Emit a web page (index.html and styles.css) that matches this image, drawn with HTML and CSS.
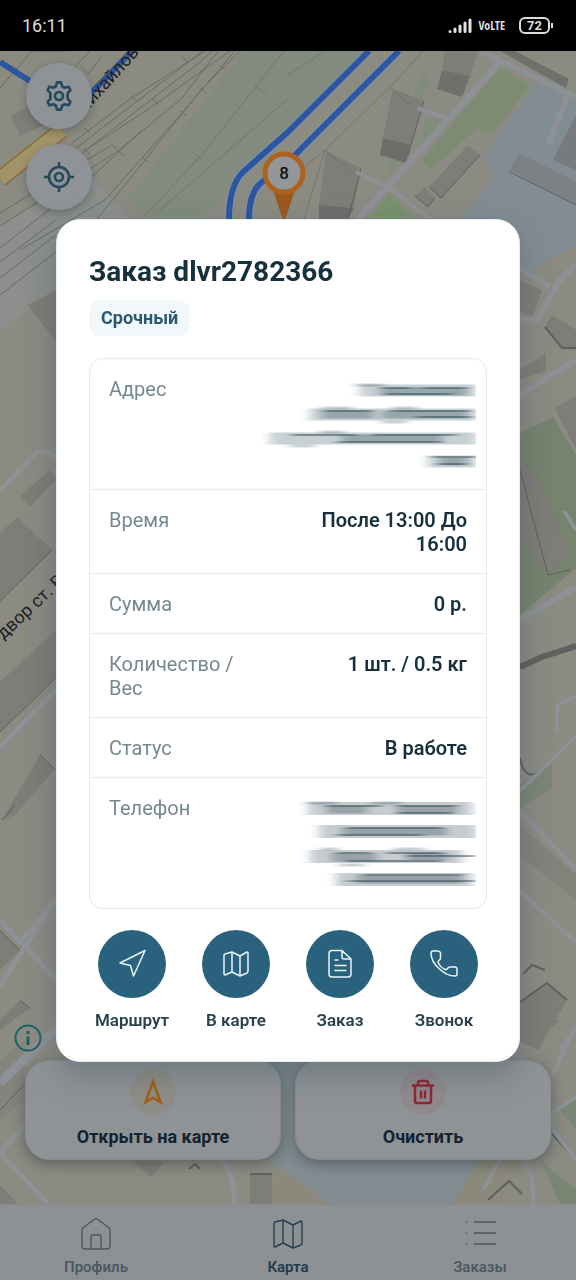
FILE: index.html
```html
<!DOCTYPE html>
<html lang="ru">

<head>
    <meta charset="UTF-8">
    <meta name="viewport" content="width=device-width, initial-scale=1.0">
    <title>Заказ dlvr2782366</title>
    <link rel="stylesheet" href="styles.css">
</head>

<body>
    <header class="status-bar">
        <span class="clock">16:11</span>
        <div class="status-icons">
            <svg width="24" height="16" viewBox="0 0 24 16" fill="none" stroke="#e4e4e4" stroke-width="3" stroke-linecap="round">
                <path d="M2 13.5v.1M7 11v2.6M12 8v5.6M17 5v8.6M22 2v11.6" />
            </svg>
            <span class="volte">VoLTE</span>
            <span class="battery">72</span>
        </div>
    </header>

    <main class="map">
        <svg class="map-canvas" viewBox="0 51 576 1153" preserveAspectRatio="xMidYMid slice">
            <rect y="51" width="576" height="1153" fill="#8b8b82" />

            <!-- ground areas -->
            <path d="M128 198L245 51H372L200 219H150z" fill="#828b7e" />
            <path d="M0 225L90 175 130 219 56 290 0 330z" fill="#8c8f8c" />
            <path d="M536 83L576 100V245L520 275 455 225 495 175 484 156z" fill="#828d93" />
            <path d="M500 68L530 86 492 134 477 128 430 170 422 160z" fill="#7d8b73" />
            <path d="M425 68L430 88 405 107 411 100z" fill="#828b7e" />
            <path d="M425 118L440 120 420 148zM388 162L402 158 388 176z" fill="#818c7a" />
            <path d="M389 194L413 219H368z" fill="#78926f" />
            <path d="M520 433L553 417 576 455V568L520 615z" fill="#76836f" />
            <path d="M520 785L552 760V788L520 808z" fill="#7b8577" />
            <path d="M280 1061H500L490 1160 452 1204H330L280 1168z" fill="#838c91" />
            <path d="M330 1204L280 1168 262 1204zM452 1204L480 1160H520L500 1204z" fill="#8b897b" />
            <path d="M560 1110L576 1095V1130zM540 1160L576 1190V1204H560z" fill="#7a8674" />
            <path d="M262 1061H290V1150L275 1170z" fill="#808b90" />

            <!-- buildings -->
            <g fill="#7e7d77">
                <path d="M442 70L470 76 462 97 437 89z" fill="#6f706c" />
                <path d="M445 51H478L470 76 442 70z" />
                <path d="M393 89L424 101 411 145 383 138z" />
                <path d="M383 138L411 145 406 163 380 155z" fill="#6c6d69" />
                <path d="M326 151L361 168 354 208 319 205z" />
                <path d="M319 205L354 208 348 219H319z" fill="#6d6e6a" />
                <path d="M468 145L480 155 441 198 429 187z" />
                <path d="M425 187L435 198 428 207 415 196z" />
                <path d="M500 51H515L569 79 566 88z" fill="#6f706c" />
                <path d="M519 153L576 182V205L510 170z" fill="#7a8084" />
                <path d="M576 115V170L553 160z" fill="#777b7e" />
                <path d="M11 115L45 100 60 118 20 136z" />
                <path d="M0 533L17 517 52 550 0 601z" />
                <path d="M28 305L56 290V342z" />
                <path d="M20 496L50 470 56 480 30 507z" />
                <path d="M0 682L56 630V678L0 732z" />
                <path d="M2 820L40 755 55 769 15 815z" />
                <path d="M0 930L20 950 0 970zM0 1020L20 1000 30 1008 0 1030z" />
                <path d="M520 465L535 470 568 552 548 575 520 540z" />
                <path d="M520 280L542 290 533 316 520 312z" />
                <path d="M545 327L552 315 576 330V350L562 348z" />
                <path d="M555 408L576 396V450z" />
                <path d="M520 370L546 353V371L520 379z" />
                <path d="M520 1002L547 983 567 1000 538 1050 520 1042z" />
                <path d="M520 825L576 875V900L520 856z" opacity=".6" />
                <path d="M525 1025L545 1034 560 1020H525zM0 1185L18 1204H0z" />
                <path d="M133 1161H165L151 1177zM250 1173H272V1204H250z" />
                <path d="M0 1060L25 1040V1100L0 1120z" opacity=".5" />
            </g>
            <g fill="none" stroke="#5f615e">
                <path d="M0 601L52 550M0 732L56 678M2 820L15 805M40 755L55 769M0 930L20 951M20 1000L30 1008" />
                <path d="M361 168L348 219M424 101L408 155M480 155L441 198 429 187M415 196L428 207 435 198M510 172L576 205" />
                <path d="M520 667L542 657 576 646" stroke-width="6" />
                <path d="M520 758Q525 785 545 768" stroke-width="2" />
                <path d="M545 327L562 348H576" stroke-width="2" />
                <path d="M488 1200L509 1181 522 1194M552 1134L576 1160M520 1002L547 983 567 1000M523 974L532 965 545 970" stroke-width="2" />
                <path d="M189 1169L195 1164 200 1169M250 1174H272" stroke-width="2" />
                <path d="M0 1110L25 1084M520 470L548 575 570 570" />
            </g>

            <!-- railways -->
            <g fill="none" stroke="#696b67">
                <path d="M72 143L130 99 205 51M76 148L195 57 202 51M82 153L200 62 212 51M86 150L150 108 230 51" />
                <path d="M0 213L110 146M0 226L118 151 182 98 218 51M0 248L95 174 142 130M20 250L105 200 182 113 235 51M80 240L145 160 200 91 240 51" />
                <path d="M0 262L56 220M0 278L56 235M0 295L56 252" />
                <path d="M144 217L205 151 284 51M160 210L290 97M325 51L288 75M423 51L390 87 325 150 300 170M325 150L304 219M389 87L410 105M325 150L355 174" opacity=".6" />
                <path d="M255 86L267 95M196 154L203 161" opacity=".6" />
                <path d="M182 57l6 5M131 96l6 5M152 99l6 5M111 144l6 5M142 157l6 5M181 111l6 5M200 88l6 5M219 65l6 5M84 128l6 5M84 149l6 5M118 151l6 5" />
                <path d="M65 51L32 51 0 88M72 70L90 51M80 66l8 8 14-18" />
            </g>

            <!-- streets -->
            <g fill="none" stroke="#8e9195" stroke-width="6" stroke-linejoin="round">
                <path d="M501 61L388 186 358 219M480 51L576 97M568 95L548 145" />
                <path d="M356 172L388 187 430 219M417 108L447 118" stroke-width="4" />
                <path d="M0 490L37 452H47L56 457M0 747L56 690M0 921L37 959 56 980M0 986L56 899M20 942L56 899" stroke-width="5" />
                <path d="M0 1083L60 1025" stroke-width="9" />
                <path d="M24 1126L0 1153 48 1204M220 1160Q235 1170 234 1204" stroke-width="5" />
                <path d="M520 268L550 287M520 320H537L560 280 576 265M520 395L576 360M520 620L576 587" />
                <path d="M564 511L576 530M576 696L557 705V733M520 791L576 736M520 812L576 869M520 891L576 942M560 1050L576 1027" stroke-width="4" />
                <path d="M576 1025L552 1076M553 1112L576 1097M553 1112V1130L576 1160M500 1160L483 1190M524 1160Q534 1175 533 1204M508 1050L530 1065" stroke-width="4" />
            </g>

            <!-- main roads -->
            <path d="M0 179L62 130" fill="none" stroke="#8a6b3c" stroke-width="17" />
            <path d="M0 179L62 130" fill="none" stroke="#a19468" stroke-width="14" />
            <path d="M58 122L128 51" fill="none" stroke="#a08a55" stroke-width="2" />
            <g fill="none" stroke-linejoin="round">
                <g stroke="#8294a9" stroke-width="8">
                    <path d="M369 51L288 132 243 172Q229 186 229 219M399 51L292 158 262 182Q249 192 249 219" />
                </g>
                <g stroke="#2c56a0" stroke-width="6">
                    <path d="M369 51L288 132 243 172Q229 186 229 219M399 51L292 158 262 182Q249 192 249 219" />
                    <path d="M0 62L30 81 60 105 93 91 132 51" />
                </g>
            </g>

            <text class="street-name" transform="translate(82 117) rotate(-48)">Михайлово</text>
            <text class="street-name" transform="translate(-6 649) rotate(-43)">т двор ст. В</text>

            <!-- order marker -->
            <path d="M284 223L273 190H295z" fill="#9c581d" />
            <circle cx="284" cy="173" r="19" fill="#94979a" stroke="#ad621f" stroke-width="5" />
            <text class="marker-number" x="284" y="179">8</text>
        </svg>

        <div class="map-controls">
            <button class="round-btn" type="button" aria-label="Настройки">
                <svg width="32" height="32" viewBox="0 0 24 24" fill="none" stroke="#24495a" stroke-width="2" stroke-linejoin="round">
                    <path d="M10.500 1.800h3l.8 2.900 1.900 1.100 2.900-.8 1.500 2.600-2.100 2.200v4.400l2.100 2.200-1.500 2.600-2.900-.8-1.900 1.100-.8 2.900h-3l-.8-2.900-1.900-1.100-2.900.8-1.500-2.600 2.100-2.200v-4.400L3.400 7.600 4.900 5l2.900.8 1.900-1.100z" />
                    <circle cx="12" cy="12" r="3" />
                </svg>
            </button>
            <button class="round-btn" type="button" aria-label="Моё местоположение">
                <svg width="32" height="32" viewBox="0 0 32 32" fill="none" stroke="#24495a" stroke-width="2.600">
                    <circle cx="16" cy="16" r="10" />
                    <circle cx="16" cy="16" r="4" />
                    <path d="M16 1v5M16 26v5M1 16h5M26 16h5" />
                </svg>
            </button>
        </div>

        <div class="map-footer">
            <button class="info-btn" type="button" aria-label="Информация">
                <svg width="28" height="28" viewBox="0 0 28 28" fill="none" stroke="#1d6165" stroke-width="2">
                    <circle cx="14" cy="14" r="12.5" />
                    <path d="M14 12.5V21M14 7v3" stroke-width="3" />
                </svg>
            </button>
            <div class="map-actions">
                <button class="map-action" type="button">
                    <span class="action-icon open">
                        <svg width="24" height="28" viewBox="0 0 24 28" fill="none" stroke="#a45d12" stroke-width="2.500">
                            <path d="M12 3.500L4.500 24l7.500-4 7.500 4z" />
                        </svg>
                    </span>
                    Открыть на карте
                </button>
                <button class="map-action" type="button">
                    <span class="action-icon clear">
                        <svg width="24" height="28" viewBox="0 0 24 28" fill="none" stroke="#912631" stroke-width="2.500" stroke-linejoin="round">
                            <path d="M1 7.5h22M4 7.5V23q0 2 2 2h12q2 0 2-2V7.5M7 7.5V5q0-2 2-2h6q2 0 2 2v2.5M10 12.5v8M14 12.5v8" />
                        </svg>
                    </span>
                    Очистить
                </button>
            </div>
        </div>
    </main>

    <nav class="tab-bar">
        <a class="tab" href="#profile">
            <svg width="34" height="34" viewBox="0 0 34 34" fill="none" stroke="#4c5862" stroke-width="1.4" stroke-linejoin="round">
                <path d="M3 13Q3 12 4 11L15 2.5Q17 1 19 2.5L30 11Q31 12 31 13V29Q31 32 28 32H6Q3 32 3 29zM12 32V19q0-1 1-1h8q1 0 1 1v13" />
            </svg>
            Профиль
        </a>
        <a class="tab active" href="#map">
            <svg width="34" height="34" viewBox="0 0 34 34" fill="none" stroke="#253f50" stroke-width="1.4" stroke-linejoin="round">
                <path d="M3 7q0-1 1-2l8-2 10 5 8-4q1 0 1 1v21q0 1-1 2l-8 3-10-5-8 4q-1 0-1-1zM12 3v23M22 8v23" />
            </svg>
            Карта
        </a>
        <a class="tab" href="#orders">
            <svg width="34" height="34" viewBox="0 0 34 34" fill="none" stroke="#4c5862" stroke-width="1.4">
                <path d="M11 5h22M11 16h22M11 27h22M3 5h1M3 16h1M3 27h1" />
            </svg>
            Заказы
        </a>
    </nav>

    <div class="overlay">
        <section class="modal" role="dialog" aria-labelledby="orderTitle">
            <h1 id="orderTitle">Заказ dlvr2782366</h1>
            <span class="badge">Срочный</span>

            <table class="details">
                <tr>
                    <th scope="row">Адрес</th>
                    <td class="hidden-value">
                        <svg width="214" height="95" viewBox="0 0 214 95" aria-label="Адрес скрыт">
                            <defs>
                                <filter id="smear" x="-10%" y="-10%" width="120%" height="120%">
                                    <feGaussianBlur stdDeviation="5 0.6" />
                                </filter>
                            </defs>
                            <g filter="url(#smear)" stroke="#294450" fill="none">
                                <path stroke-width="12" stroke-opacity=".25" d="M98 13.500H214M48 37.500H214M8 61.500H214M166 84.500H214" />
                                <path stroke-width="8" stroke-opacity=".3" d="M118 14.500H205M60 37.500H112M120 37.500H205M80 61.500H180M178 84.500H205" />
                                <path stroke-width="2" stroke-opacity=".5" d="M120 11H150M160 11H205M125 17H190M62 34H110M130 34H208M155 40H210M30 58H95M110 58H195M75 65H180M170 80H214M176 87H205" />
                                <path stroke-width="3" stroke-opacity=".25" d="M94 8H122M60 31H90M130 31H155M58 55H82M28 69H52M120 45H145" />
                            </g>
                        </svg>
                    </td>
                </tr>
                <tr>
                    <th scope="row">Время</th>
                    <td>После 13:00 До 16:00</td>
                </tr>
                <tr>
                    <th scope="row">Сумма</th>
                    <td>0 р.</td>
                </tr>
                <tr>
                    <th scope="row">Количество / Вес</th>
                    <td>1 шт. / 0.5 кг</td>
                </tr>
                <tr>
                    <th scope="row">Статус</th>
                    <td>В работе</td>
                </tr>
                <tr>
                    <th scope="row">Телефон</th>
                    <td class="hidden-value">
                        <svg width="214" height="95" viewBox="0 0 214 95" aria-label="Телефон скрыт">
                            <g filter="url(#smear)" stroke="#294450" fill="none">
                                <path stroke-width="13" stroke-opacity=".27" d="M46 12.500H210M57 35.500H214M48 60.500H200M74 83.500H210" />
                                <path stroke-width="8" stroke-opacity=".3" d="M65 13.500H105M135 13.500H195M80 35.500H185M70 61.500H115M145 60.500H185M95 83.500H200" />
                                <path stroke-width="2" stroke-opacity=".5" d="M64 10H120M135 10H195M135 17H190M85 32H180M75 39H160M74 57H110M125 57H180M145 60H214M85 65H180M100 79H200M86 85H214" />
                                <path stroke-width="3" stroke-opacity=".25" d="M46 7H75M110 7H140M58 53H76M132 53H162M78 69H102" />
                            </g>
                        </svg>
                    </td>
                </tr>
            </table>

            <div class="actions">
                <button class="action" type="button">
                    <span class="action-circle">
                        <svg width="32" height="32" viewBox="0 0 32 32">
                            <path d="M29 2.500L4 15l10.500 2.500L17.500 28z" />
                        </svg>
                    </span>
                    Маршрут
                </button>
                <button class="action" type="button">
                    <span class="action-circle">
                        <svg width="32" height="32" viewBox="0 0 32 32">
                            <path d="M4 7q0-1 1-1l7-2 8 4 7-4q1 0 1 1v18q0 1-1 2l-7 3-8-4-7 3q-1 0-1-1zM12 4v20M20 8v20" />
                        </svg>
                    </span>
                    В карте
                </button>
                <button class="action" type="button">
                    <span class="action-circle">
                        <svg width="32" height="32" viewBox="0 0 32 32">
                            <path d="M18 2.500H8Q5 2.500 5 5.500V26Q5 29 8 29H24Q27 29 27 26V11zM18 2.500V9Q18 11 20 11H27M11 12h3M11 17.500h11M11 22.500h11" />
                        </svg>
                    </span>
                    Заказ
                </button>
                <button class="action" type="button">
                    <span class="action-circle">
                        <svg width="32" height="32" viewBox="0 0 32 32">
                            <path d="M5 3h5q2 0 2.500 2v5q0 1.500-1.500 2.500-1.500 1-.5 3 2 4 6.500 6 1.500.5 2.500-1 1-1.500 2.500-1.500h5q2 0 2 2v5q0 2-2 2Q19 28 11.500 21 3 13.500 3 5q0-2 2-2z" />
                        </svg>
                    </span>
                    Звонок
                </button>
            </div>
        </section>
    </div>
</body>

</html>
```

FILE: styles.css
```css
* {
    box-sizing: border-box;
}

body {
    margin: 0;
    min-height: 100vh;
    display: flex;
    flex-direction: column;
    background: #000;
    color: #16303d;
    font-family: Roboto, "Noto Sans", sans-serif;
}

button {
    padding: 0;
    border: none;
    background: none;
    color: inherit;
    font-family: inherit;
    cursor: pointer;
}

svg {
    display: block;
}

/* Status bar */
.status-bar {
    height: 51px;
    padding: 0 26px 0 22px;
    display: flex;
    align-items: center;
    justify-content: space-between;
    color: #dcdcdc;
}

.clock {
    font-size: 18px;
}

.status-icons {
    display: flex;
    align-items: center;
    gap: 6px;
}

.volte {
    margin-right: 8px;
    font-family: "Liberation Sans Narrow", "Open Sans Condensed", Lato, sans-serif;
    font-size: 12px;
    font-weight: 700;
}

.battery {
    position: relative;
    width: 31px;
    height: 17px;
    border: 2px solid #dcdcdc;
    border-radius: 6px;
    font-size: 13px;
    font-weight: 700;
    line-height: 13px;
    text-align: center;
}

.battery::after {
    content: "";
    position: absolute;
    top: 4px;
    right: -5px;
    width: 2px;
    height: 5px;
    background: #dcdcdc;
}

/* Map */
.map {
    position: relative;
    flex: 1;
    display: flex;
    flex-direction: column;
    justify-content: space-between;
    overflow: hidden;
}

.map-canvas {
    position: absolute;
    inset: 0;
    width: 100%;
    height: 100%;
}

.street-name {
    fill: #1e2226;
    font-size: 18px;
}

.marker-number {
    fill: #111;
    font-size: 17px;
    font-weight: 500;
    text-anchor: middle;
}

.map-controls {
    position: relative;
    display: flex;
    flex-direction: column;
    align-items: flex-start;
    gap: 15px;
    padding: 12px 26px;
}

.round-btn {
    width: 66px;
    height: 66px;
    display: flex;
    align-items: center;
    justify-content: center;
    border-radius: 50%;
    background: #8f9397;
    box-shadow: 0 3px 8px rgba(20, 30, 40, 0.3);
}

.map-footer {
    position: relative;
    padding: 0 25px 44px;
}

.info-btn {
    margin: 0 0 8px -11px;
    display: block;
}

.map-actions {
    display: flex;
    gap: 14px;
}

.map-action {
    flex: 1;
    height: 100px;
    display: flex;
    flex-direction: column;
    align-items: center;
    gap: 10px;
    padding-top: 8px;
    border: 1px solid #878c90;
    border-radius: 24px;
    background: #8f9396;
    box-shadow: 0 4px 14px rgba(20, 30, 40, 0.4);
    color: #14242e;
    font-size: 18px;
    font-weight: 700;
    line-height: 24px;
}

.action-icon {
    width: 46px;
    height: 46px;
    display: flex;
    align-items: center;
    justify-content: center;
    border-radius: 50%;
}

.action-icon.open {
    background: #8f8d87;
}

.action-icon.clear {
    background: #908a8d;
}

/* Bottom tabs */
.tab-bar {
    position: relative;
    height: 76px;
    display: flex;
    border-top: 1px solid #878b8e;
    background: #8e9194;
}

.tab {
    flex: 1;
    display: flex;
    flex-direction: column;
    align-items: center;
    gap: 4px;
    padding-top: 12px;
    color: #4b5963;
    font-size: 15px;
    font-weight: 600;
    line-height: 24px;
    text-decoration: none;
}

.tab.active {
    color: #233c4c;
}

/* Order dialog */
.overlay {
    position: fixed;
    inset: 0;
    display: flex;
    align-items: center;
    justify-content: center;
    padding: 0 56px;
}

.modal {
    width: 100%;
    max-width: 560px;
    padding: 32px 32px 31px;
    border: 1px solid #e6ecee;
    border-radius: 24px;
    background: #fff;
    box-shadow: 0 12px 32px rgba(50, 70, 80, 0.35);
}

h1 {
    margin: 0 0 8px;
    font-size: 28px;
    font-weight: 700;
    line-height: 40px;
}

.badge {
    display: block;
    width: fit-content;
    margin-bottom: 22px;
    padding: 6px 12px;
    border-radius: 12px;
    background: #f2f7fa;
    color: #2a5a70;
    font-size: 18px;
    font-weight: 700;
    line-height: 24px;
}

.details {
    width: 100%;
    margin-bottom: 21px;
    table-layout: fixed;
    border: 1px solid #e6ebed;
    border-radius: 14px;
    border-spacing: 0;
    font-size: 20px;
    line-height: 24px;
}

.details th,
.details td {
    padding: 18px 19px 17px;
    vertical-align: top;
}

.details tr + tr th,
.details tr + tr td {
    border-top: 1px solid #e6ebed;
}

.details th {
    width: 40%;
    padding-right: 0;
    color: #758990;
    font-weight: 400;
    text-align: left;
}

.details td {
    padding-left: 24px;
    font-weight: 600;
    text-align: right;
}

.details .hidden-value {
    padding-left: 0;
    padding-right: 10px;
}

.hidden-value svg {
    margin-left: auto;
}

.actions {
    display: flex;
    justify-content: space-between;
}

.action {
    width: 86px;
    display: flex;
    flex-direction: column;
    align-items: center;
    gap: 12px;
    color: #29424e;
    font-size: 17px;
    font-weight: 600;
    line-height: 20px;
}

.action-circle {
    width: 68px;
    height: 68px;
    display: flex;
    align-items: center;
    justify-content: center;
    border-radius: 50%;
    background: #2a627d;
}

.action-circle svg {
    fill: none;
    stroke: #e6f5fb;
    stroke-width: 1.5px;
    stroke-linejoin: round;
    stroke-linecap: round;
}
```
